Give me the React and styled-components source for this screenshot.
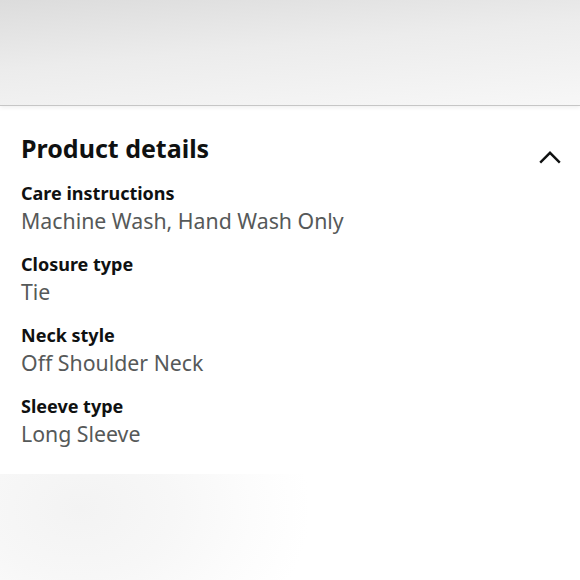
import React from "react"
import styled, { createGlobalStyle } from "styled-components"

const Global = createGlobalStyle`
  html, body {
    margin: 0;
    padding: 0;
    background: #fff;
  }
  body {
    font-family: "Noto Sans", "Open Sans", sans-serif;
  }
`

const Page = styled.div`
  width: 580px;
  height: 580px;
  display: flex;
  flex-direction: column;
  overflow: hidden;
  background: #fff;
`

const Banner = styled.div`
  height: 105px;
  flex-shrink: 0;
  background: linear-gradient(175deg, #dcdcdc 0%, #ececec 45%, #f7f7f7 100%);
  border-bottom: 1px solid #c6c6c6;
  box-shadow: 0 2px 4px rgba(0, 0, 0, 0.06);
  position: relative;
  z-index: 1;
`

const Section = styled.section`
  padding: 26px 19px 0 21px;
  height: 368px;
  flex-shrink: 0;
  box-sizing: border-box;
`

const Header = styled.div`
  display: flex;
  justify-content: space-between;
  align-items: flex-start;
`

const Title = styled.h2`
  margin: 0;
  font-size: 25px;
  font-weight: 700;
  color: #0f1111;
  line-height: 32px;
`

const Toggle = styled.button`
  border: none;
  background: none;
  padding: 0;
  width: 22px;
  height: 14px;
  display: flex;
  align-items: center;
  justify-content: center;
  margin-top: 18px;
`

const List = styled.dl`
  margin: 16px 0 0 0;
  display: flex;
  flex-direction: column;
  gap: 15px;
`

const Item = styled.div`
  display: flex;
  flex-direction: column;
`

const Label = styled.dt`
  font-size: 18px;
  font-weight: 700;
  color: #0f1111;
  line-height: 26px;
`

const Value = styled.dd`
  margin: 0;
  font-size: 21.3px;
  color: #565959;
  line-height: 30px;
`

const Footer = styled.div`
  flex: 1;
  background: radial-gradient(ellipse 230px 170px at 80px 35px, #f3f3f3 0%, #f7f7f7 40%, #fcfcfc 75%, #ffffff 100%);
`

const details = [
  ["Care instructions", "Machine Wash, Hand Wash Only"],
  ["Closure type", "Tie"],
  ["Neck style", "Off Shoulder Neck"],
  ["Sleeve type", "Long Sleeve"],
]

export default function App() {
  return (
    <Page>
      <Global />
      <Banner />
      <Section>
        <Header>
          <Title>Product details</Title>
          <Toggle aria-label="Collapse">
            <svg width="22" height="13" viewBox="0 0 22 13">
              <path d="M1.2 11.6 L11 1.8 L20.8 11.6" fill="none" stroke="#0f1111" strokeWidth="2.4" />
            </svg>
          </Toggle>
        </Header>
        <List>
          {details.map(([label, value]) => (
            <Item key={label}>
              <Label>{label}</Label>
              <Value>{value}</Value>
            </Item>
          ))}
        </List>
      </Section>
      <Footer />
    </Page>
  )
}
